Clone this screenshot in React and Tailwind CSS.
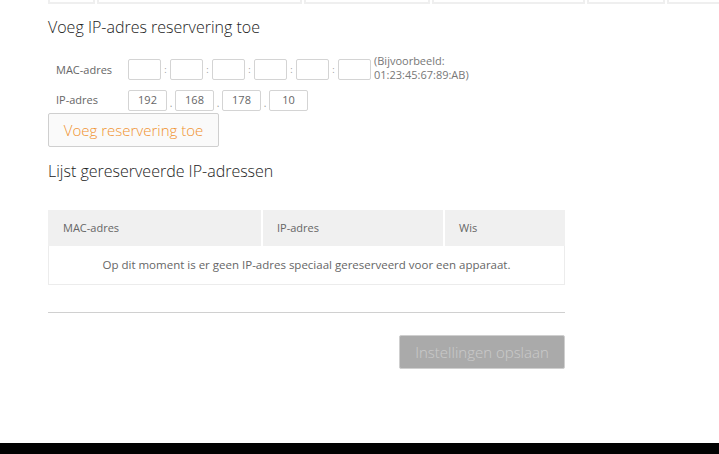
import React from "react";

function Box({ w, value }) {
  return (
    <div className={`h-[21px] border border-[#d4d4d4] rounded-[2px] bg-white flex items-center justify-center text-[11px] text-[#666] ${w}`}>
      {value}
    </div>
  );
}

export default function App() {
  const macBoxes = [0, 1, 2, 3, 4, 5];
  const ip = ["192", "168", "178", "10"];
  return (
    <div className="w-[719px] h-[454px] bg-white flex flex-col overflow-hidden font-['Open_Sans','Lato',sans-serif]">
      {/* cut-off table row at top */}
      <div className="flex h-[4px] pl-[48px] gap-[2px] shrink-0">
        <div className="w-[47px] border-x-2 border-b-2 border-[#efefef]" />
        <div className="w-[205px] border-x-2 border-b-2 border-[#efefef]" />
        <div className="w-[126px] border-x-2 border-b-2 border-[#efefef]" />
        <div className="w-[153px] border-x-2 border-b-2 border-[#efefef]" />
        <div className="w-[78px] border-x-2 border-b-2 border-[#efefef]" />
        <div className="flex-1 border-l-2 border-b-2 border-[#efefef]" />
      </div>

      <div className="pl-[48px] w-[565px] flex flex-col">
        <h2 className="text-[16px] font-light text-[#222] leading-[20px] mt-[13px]">Voeg IP-adres reservering toe</h2>

        <div className="flex items-start mt-[22px] h-[27px]">
          <div className="w-[80px] pl-[8px] text-[11px] text-[#666] mt-[3px]">MAC-adres</div>
          <div className="flex items-center">
            {macBoxes.map((i) => (
              <React.Fragment key={i}>
                <Box w="w-[33px]" />
                {i < 5 && <span className="w-[9px] text-center text-[9px] text-[#999]">:</span>}
              </React.Fragment>
            ))}
          </div>
          <div className="ml-[3px] -mt-[5px] text-[11px] leading-[14px] text-[#777]">
            <div>(Bijvoorbeeld:</div>
            <div>01:23:45:67:89:AB)</div>
          </div>
        </div>

        <div className="flex items-center h-[23px] mt-[3px]">
          <div className="w-[80px] pl-[8px] text-[11px] text-[#666]">IP-adres</div>
          <div className="flex items-center">
            {ip.map((v, i) => (
              <React.Fragment key={i}>
                <Box w="w-[39px]" value={v} />
                {i < 3 && <span className="w-[8px] text-center text-[10px] text-[#999] pt-[5px]">.</span>}
              </React.Fragment>
            ))}
          </div>
        </div>

        <button className="mt-[1px] w-[171px] h-[34px] border border-[#cfcfcf] rounded-[2px] bg-[#fafafa] text-[#f0922e] text-[15px] font-light text-center">
          Voeg reservering toe
        </button>

        <h2 className="text-[16px] font-light text-[#222] leading-[20px] mt-[14px]">Lijst gereserveerde IP-adressen</h2>

        <div className="mt-[29px] w-[517px] flex flex-col text-[11px] text-[#666]">
          <div className="flex h-[36px] gap-[2px] bg-white">
            <div className="w-[213px] bg-[#f0f0f0] flex items-center pl-[15px]">MAC-adres</div>
            <div className="w-[180px] bg-[#f0f0f0] flex items-center pl-[14px]">IP-adres</div>
            <div className="flex-1 bg-[#f0f0f0] flex items-center pl-[14px]">Wis</div>
          </div>
          <div className="h-[39px] border border-t-0 border-[#ececec] flex items-center justify-center text-[11.5px]">
            Op dit moment is er geen IP-adres speciaal gereserveerd voor een apparaat.
          </div>
        </div>

        <div className="mt-[27px] w-[517px] h-px bg-[#d0d0d0]" />

        <div className="flex justify-end w-[517px] mt-[22px]">
          <button className="w-[166px] h-[34px] bg-[#aaaaaa] border border-[#cfcfcf] rounded-[2px] text-[#cacaca] text-[15px] font-light">
            Instellingen opslaan
          </button>
        </div>
      </div>

      <div className="flex-1" />
      <div className="h-[11px] bg-[#020202] shrink-0" />
    </div>
  );
}
